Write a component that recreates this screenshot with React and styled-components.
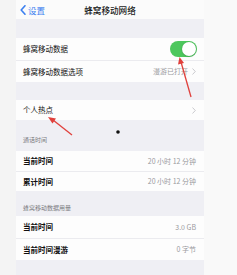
import React from "react";
import styled, { createGlobalStyle } from "styled-components";

const Global = createGlobalStyle`
  html, body { margin: 0; padding: 0; background: #f6f6f6; }
  * { box-sizing: border-box; }
`;

const Page = styled.div`
  position: relative;
  width: 237px;
  height: 275px;
  display: flex;
  overflow: hidden;
  font-family: "Noto Sans CJK SC", "Noto Sans", sans-serif;
`;

const Margin = styled.div`
  width: ${(p) => p.$w}px;
  background: ${(p) => p.$bg};
  flex-shrink: 0;
`;

const Column = styled.div`
  width: 188px;
  display: flex;
  flex-direction: column;
  background: #efeff4;
`;

const NavBar = styled.div`
  height: 19px;
  background: #fbfbfb;
  position: relative;
  display: flex;
  align-items: center;
  justify-content: center;
`;

const Back = styled.div`
  position: absolute;
  left: 4px;
  top: 0;
  height: 19px;
  display: flex;
  align-items: center;
  gap: 2px;
  color: #3a7ff0;
  font-size: 8.5px;
`;

const Title = styled.div`
  font-size: 8.6px;
  font-weight: 500;
  color: #1a1a1a;
`;

const Gap = styled.div`
  height: ${(p) => p.$h}px;
  flex-shrink: 0;
`;

const Header = styled.div`
  height: ${(p) => p.$h}px;
  display: flex;
  align-items: flex-end;
  padding: 0 0 ${(p) => p.$pb}px 7px;
  font-size: 6px;
  color: #7a7a80;
  line-height: 1;
`;

const Group = styled.div`
  background: #fdfdfd;
  display: flex;
  flex-direction: column;
`;

const Row = styled.div`
  height: ${(p) => p.$h}px;
  display: flex;
  align-items: center;
  justify-content: space-between;
  padding: 0 8px 0 7px;
  border-top: ${(p) => (p.$sep ? "1px solid #ebebef" : "none")};
`;

const Label = styled.span`
  font-size: 7.5px;
  font-weight: ${(p) => (p.$bold ? 600 : 400)};
  color: #111;
  line-height: 1;
`;

const Value = styled.span`
  display: flex;
  align-items: center;
  gap: 4px;
  font-size: 7px;
  color: #9a9a9e;
  line-height: 1;
  padding-right: ${(p) => (p.$pad ? 1 : 0)}px;
`;

const Toggle = styled.div`
  width: 27px;
  height: 16px;
  border-radius: 8px;
  background: #4dc75d;
  position: relative;
  margin-right: -1px;
`;

const Knob = styled.div`
  position: absolute;
  right: 1px;
  top: 1px;
  width: 14px;
  height: 14px;
  border-radius: 50%;
  background: #fff;
  box-shadow: 0 0.5px 1.5px rgba(0,0,0,0.25);
`;

const Overlay = styled.svg`
  position: absolute;
  left: 0;
  top: 0;
  pointer-events: none;
`;

const Chevron = () => (
  <svg width="4" height="7" viewBox="0 0 4 7">
    <path d="M0.5 0.5 L3.3 3.5 L0.5 6.5" fill="none" stroke="#c4c4c8" strokeWidth="0.9" />
  </svg>
);

const rows3 = [
  ["当前时间", "20 小时 12 分钟"],
  ["累计时间", "20 小时 12 分钟"],
];
const rows4 = [
  ["当前时间", "3.0 GB"],
  ["当前时间漫游", "0 字节"],
];

export default function App() {
  return (
    <>
      <Global />
      <Page>
        <Margin $w={16} $bg="#f4f4f4" />
        <Column>
          <NavBar>
            <Back>
              <svg width="6" height="10" viewBox="0 0 6 10">
                <path d="M5 0.8 L1.2 5 L5 9.2" fill="none" stroke="#3a7ff0" strokeWidth="1.6" strokeLinecap="round" strokeLinejoin="round" />
              </svg>
              <span>设置</span>
            </Back>
            <Title>蜂窝移动网络</Title>
          </NavBar>
          <Gap $h={19} />
          <Group>
            <Row $h={22}>
              <Label>蜂窝移动数据</Label>
              <Toggle><Knob /></Toggle>
            </Row>
            <Row $h={22} $sep>
              <Label>蜂窝移动数据选项</Label>
              <Value>漫游已打开<Chevron /></Value>
            </Row>
          </Group>
          <Gap $h={18} />
          <Group>
            <Row $h={20}>
              <Label>个人热点</Label>
              <Value><Chevron /></Value>
            </Row>
          </Group>
          <Header $h={31} $pb={8}>通话时间</Header>
          <Group>
            {rows3.map(([l, v], i) => (
              <Row key={i} $h={20} $sep={i > 0}>
                <Label $bold>{l}</Label>
                <Value>{v}</Value>
              </Row>
            ))}
          </Group>
          <Header $h={25} $pb={5}>蜂窝移动数据用量</Header>
          <Group>
            {rows4.map(([l, v], i) => (
              <Row key={i} $h={22} $sep={i > 0}>
                <Label $bold>{l}</Label>
                <Value>{v}</Value>
              </Row>
            ))}
          </Group>
        </Column>
        <Margin $w={33} $bg="#f9f9f9" />
        <Overlay width="237" height="275" viewBox="0 0 237 275">
          <line x1="191" y1="97" x2="181" y2="62" stroke="#e0403c" strokeWidth="1.3" />
          <polygon points="179.5,57 178,64.5 184,63" fill="#e0403c" />
          <line x1="72" y1="135" x2="53" y2="120" stroke="#e0403c" strokeWidth="1.3" />
          <polygon points="48,117 52.5,123.5 56,118.5" fill="#e0403c" />
          <circle cx="118" cy="132" r="1.8" fill="#111" />
        </Overlay>
      </Page>
    </>
  );
}
